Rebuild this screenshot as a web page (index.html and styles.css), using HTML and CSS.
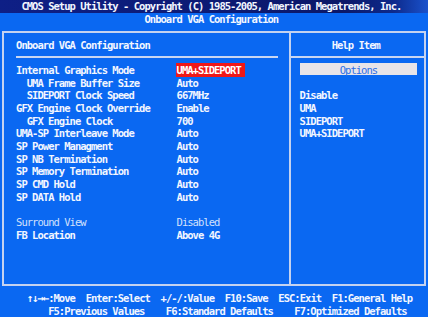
FILE: index.html
```html
<!DOCTYPE html>
<html lang="en">
<head>
<meta charset="UTF-8">
<title>CMOS Setup Utility - Onboard VGA Configuration</title>
<link rel="stylesheet" href="styles.css">
</head>
<body>
  <div class="screen">
    <div class="row title">CMOS Setup Utility - Copyright (C) 1985-2005, American Megatrends, Inc.</div>
    <div class="row subtitle">Onboard VGA Configuration</div>

    <div class="frame">
      <section class="pane main">
        <div class="row">Onboard VGA Configuration</div>
        <div class="row rule"></div>
        <div class="item"><span class="label">Internal Graphics Mode</span><span class="value selected">UMA+SIDEPORT</span></div>
        <div class="item sub"><span class="label">UMA Frame Buffer Size</span><span class="value">Auto</span></div>
        <div class="item sub"><span class="label">SIDEPORT Clock Speed</span><span class="value">667MHz</span></div>
        <div class="item"><span class="label">GFX Engine Clock Override</span><span class="value">Enable</span></div>
        <div class="item sub"><span class="label">GFX Engine Clock</span><span class="value">700</span></div>
        <div class="item"><span class="label">UMA-SP Interleave Mode</span><span class="value">Auto</span></div>
        <div class="item"><span class="label">SP Power Managment</span><span class="value">Auto</span></div>
        <div class="item"><span class="label">SP NB Termination</span><span class="value">Auto</span></div>
        <div class="item"><span class="label">SP Memory Termination</span><span class="value">Auto</span></div>
        <div class="item"><span class="label">SP CMD Hold</span><span class="value">Auto</span></div>
        <div class="item"><span class="label">SP DATA Hold</span><span class="value">Auto</span></div>
        <div class="row"></div>
        <div class="item dim"><span class="label">Surround View</span><span class="value">Disabled</span></div>
        <div class="item"><span class="label">FB Location</span><span class="value">Above 4G</span></div>
      </section>

      <aside class="pane help">
        <div class="row help-title">Help Item</div>
        <div class="row rule"></div>
        <div class="row opt-row"><span class="options">Options</span></div>
        <div class="row"></div>
        <div class="row opt-row">Disable</div>
        <div class="row opt-row">UMA</div>
        <div class="row opt-row">SIDEPORT</div>
        <div class="row opt-row">UMA+SIDEPORT</div>
      </aside>
    </div>

    <div class="keys">
      <div class="row keys-top"><span class="arrows">↑↓→←</span>:Move  Enter:Select  +/-/:Value  F10:Save  ESC:Exit  F1:General Help</div>
      <div class="row keys-bottom">F5:Previous Values    F6:Standard Defaults    F7:Optimized Defaults</div>
    </div>
  </div>
</body>
</html>
```

FILE: styles.css
```css
* {
  margin: 0;
  padding: 0;
  box-sizing: border-box;
}

body {
  background: #0a66f0;
}

/* 80x25 text mode: one cell is 5.35 x 12.68 px */
.screen {
  --cw: 5.35px;
  --rh: 12.68px;
  width: 428px;
  height: 317px;
  overflow: hidden;
  background: #0a68f2;
  color: #f2f6ff;
  font-family: "DejaVu Sans Mono", monospace;
  font-weight: bold;
  font-size: 10.5px;
  letter-spacing: -0.97px;
  line-height: var(--rh);
}

.row {
  height: var(--rh);
  padding-top: 0.6px;
  white-space: nowrap;
}

.title {
  background: linear-gradient(to right, #0e1f86 0%, #0b1868 80%, #0d2a8c 92%, #1a52cc 100%);
  padding-left: calc(var(--cw) * 4);
  padding-top: 0;
}

.subtitle {
  padding-left: calc(var(--cw) * 27);
}

.frame {
  margin: 5.34px 1.7px;
  height: 255.6px;
  border: 2px solid #c4d2f0;
  display: grid;
  grid-template-columns: 287.8px 1fr;
}

.pane {
  padding-top: 5.34px;
}

.main {
  border-right: 2px solid #c4d2f0;
  padding-left: 12.35px;
  padding-right: 11.5px;
}

.rule {
  display: flex;
  align-items: center;
  padding-top: 0;
}

.rule::after {
  content: "";
  flex: 1;
  border-top: 2px solid #c8d6f2;
}

.item {
  height: var(--rh);
  white-space: nowrap;
  display: grid;
  grid-template-columns: calc(var(--cw) * 30) auto;
}

.item .label,
.item .value {
  padding-top: 0.6px;
}

.item.sub .label {
  padding-left: calc(var(--cw) * 2);
}

.item.dim {
  color: #d2e0fc;
  font-weight: normal;
}

.value.selected {
  justify-self: start;
  width: calc(var(--cw) * 13);
  margin-left: -1px;
  padding-left: 1px;
  background: #f01818;
  color: #ffffff;
}

.help-title {
  padding-left: 40.2px;
}

.opt-row {
  padding-left: 8.1px;
}

.options {
  display: inline-block;
  vertical-align: top;
  width: calc(var(--cw) * 22);
  height: 12px;
  margin-top: -0.6px;
  padding-top: 0.6px;
  text-align: center;
  background: #e8e4e8;
  color: #2c6ee6;
  font-weight: normal;
}

.keys-top,
.keys-bottom {
  white-space: pre;
}

.keys-top {
  padding-left: calc(var(--cw) * 5);
}

.arrows {
  font-size: 11px;
  letter-spacing: -1.27px;
}

.keys-bottom {
  padding-left: calc(var(--cw) * 9);
}
```
